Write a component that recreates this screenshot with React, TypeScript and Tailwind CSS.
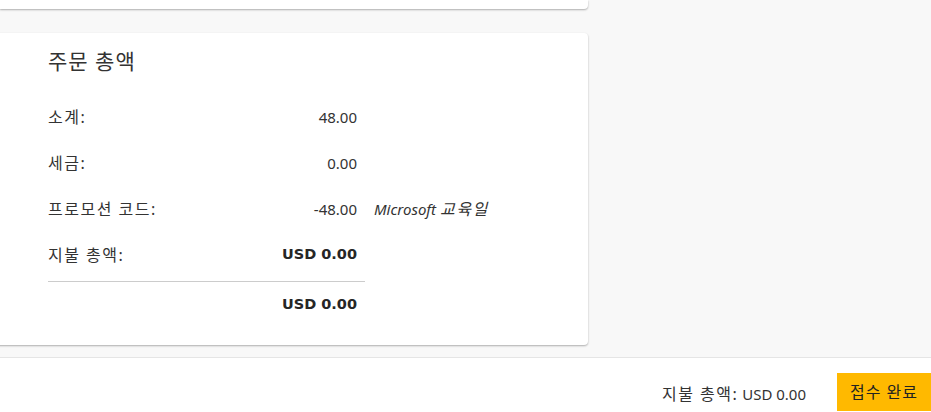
const font = { fontFamily: '"Segoe UI", "Noto Sans", "Noto Sans CJK KR", sans-serif' };
const boldFont = { fontFamily: '"DejaVu Sans", "Noto Sans CJK KR", sans-serif' };

type Row = { label: string; value: string; bold?: boolean; note?: string };

const rows: Row[] = [
  { label: "소계:", value: "48.00" },
  { label: "세금:", value: "0.00" },
  { label: "프로모션 코드:", value: "-48.00", note: "교육일" },
  { label: "지불 총액:", value: "USD 0.00", bold: true },
];

const Ko = ({ children }: { children: React.ReactNode }) => (
  <span className="text-[16px] tracking-[1.5px]">{children}</span>
);

const Bold = ({ children }: { children: React.ReactNode }) => (
  <span className="text-[14.5px] font-bold text-[#262626]" style={boldFont}>
    {children}
  </span>
);

const SummaryRow = ({ label, value, bold, note }: Row) => (
  <div className="flex items-center h-[46px] text-[#333]">
    <div className="w-[317px] flex items-center justify-between pr-[8px]">
      <Ko>{label}</Ko>
      {bold ? <Bold>{value}</Bold> : <span className="text-[15px]">{value}</span>}
    </div>
    {note && (
      <span className="ml-[9px] text-[15px] italic">
        Microsoft <Ko>{note}</Ko>
      </span>
    )}
  </div>
);

export default function App() {
  return (
    <div className="w-[931px] h-[412px] bg-[#f8f8f8] flex flex-col overflow-hidden" style={font}>
      <div className="flex-1 flex flex-col gap-[24px]">
        <div className="w-[588px] h-[9px] bg-white rounded-br-[4px] shadow-[0_1px_2px_rgba(0,0,0,0.3)]" />
        <div className="w-[600px] -ml-[12px] h-[312px] bg-white rounded-[4px] shadow-[0_1px_2px_rgba(0,0,0,0.3)] pt-[14px] pl-[60px] flex flex-col">
          <h2 className="text-[21px] leading-[28px] font-normal tracking-[1px] text-[#333]">주문 총액</h2>
          <div className="mt-[19px] flex flex-col">
            {rows.map((r) => (
              <SummaryRow key={r.label} {...r} />
            ))}
            <div className="mt-[3px] w-[317px] border-t border-[#ccc]" />
            <div className="flex items-center h-[46px]">
              <div className="w-[317px] flex justify-end pr-[8px]">
                <Bold>USD 0.00</Bold>
              </div>
            </div>
          </div>
        </div>
      </div>
      <div className="h-[55px] bg-white border-t border-[#e5e5e5] flex items-start justify-end pt-[15px]">
        <span className="mt-[9px] text-[15px] text-[#333]">
          <Ko>지불 총액:</Ko> USD 0.00
        </span>
        <button className="ml-[31px] w-[94px] h-[38px] bg-[#ffb900] text-[16px] tracking-[1px] text-[#222]">접수 완료</button>
      </div>
    </div>
  );
}
